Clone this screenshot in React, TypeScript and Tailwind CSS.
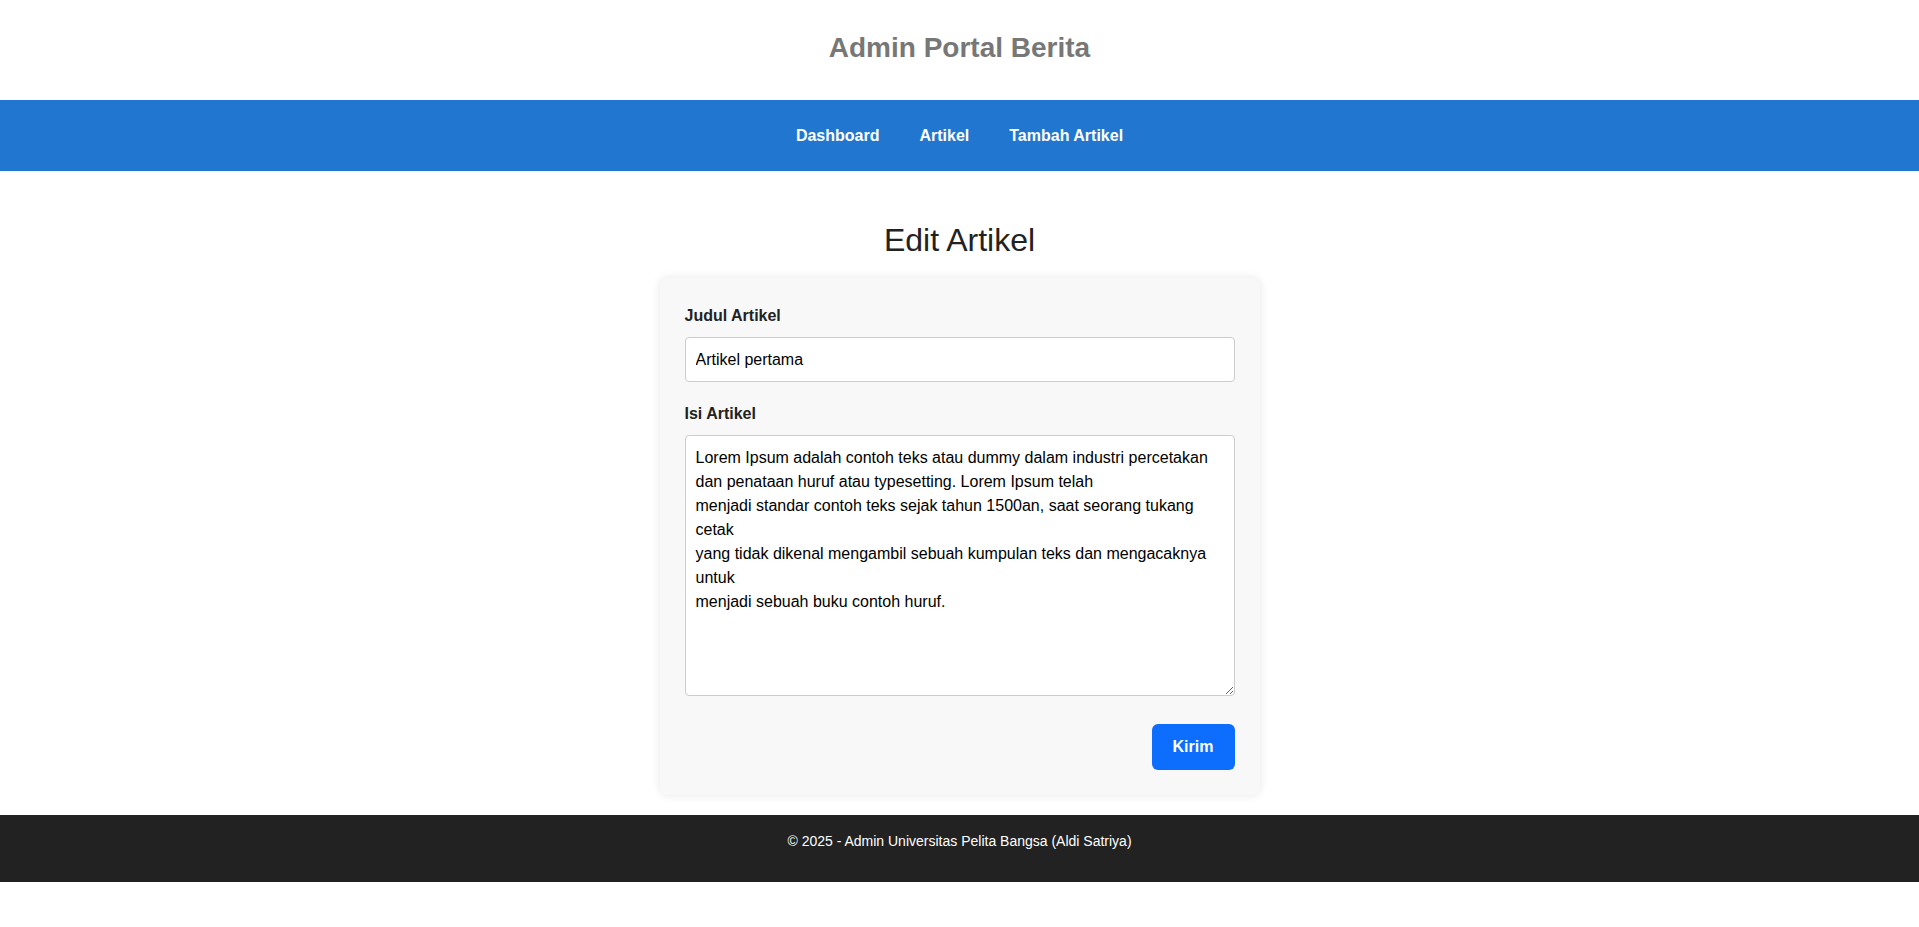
const isiArtikel =
  "Lorem Ipsum adalah contoh teks atau dummy dalam industri percetakan\n" +
  "dan penataan huruf atau typesetting. Lorem Ipsum telah\n" +
  "menjadi standar contoh teks sejak tahun 1500an, saat seorang tukang\n" +
  "cetak\n" +
  "yang tidak dikenal mengambil sebuah kumpulan teks dan mengacaknya\n" +
  "untuk\n" +
  "menjadi sebuah buku contoh huruf.";

export default function App() {
  return (
    <div className="min-h-[927px] bg-white font-['Liberation_Sans',Arial,sans-serif]">
      <header className="h-[100px] pt-[32px] text-center">
        <h1 className="text-[28px] leading-[32px] font-bold text-[#777777]">
          Admin Portal Berita
        </h1>
      </header>

      <nav className="h-[71px] bg-[#2176cf] flex items-center justify-center gap-10">
        <a className="text-white font-bold text-base">Dashboard</a>
        <a className="text-white font-bold text-base">Artikel</a>
        <a className="text-white font-bold text-base">Tambah Artikel</a>
      </nav>

      <main className="pb-5">
        <h2 className="mt-[51px] mb-[19px] text-center text-[32px] leading-[37px] text-[#222222]">
          Edit Artikel
        </h2>

        <form className="mx-auto w-[600px] bg-[#f8f8f8] rounded-lg shadow-[0_0_10px_rgba(0,0,0,0.1)] px-[25px] pt-[29px] pb-[25px]">
          <div className="mb-[23px]">
            <label className="block mb-3 text-base leading-[18px] font-bold text-[#222222]">
              Judul Artikel
            </label>
            <input
              type="text"
              defaultValue="Artikel pertama"
              className="block w-full h-[45px] px-[10px] bg-white border border-[#cccccc] rounded-[4px] text-base text-black"
            />
          </div>

          <div>
            <label className="block mb-3 text-base leading-[18px] font-bold text-[#222222]">
              Isi Artikel
            </label>
            <textarea
              defaultValue={isiArtikel}
              className="block w-full h-[261px] p-[10px] bg-white border border-[#cccccc] rounded-[4px] text-base leading-6 text-black"
            />
          </div>

          <div className="mt-[28px] flex justify-end">
            <button
              type="button"
              className="h-[46px] w-[83px] bg-[#0d6efd] text-white font-bold text-base rounded-md"
            >
              Kirim
            </button>
          </div>
        </form>
      </main>

      <footer className="bg-[#222222] pt-4 pb-[31px] text-center">
        <p className="text-sm leading-5 text-white">
          © 2025 - Admin Universitas Pelita Bangsa (Aldi Satriya)
        </p>
      </footer>
    </div>
  );
}
